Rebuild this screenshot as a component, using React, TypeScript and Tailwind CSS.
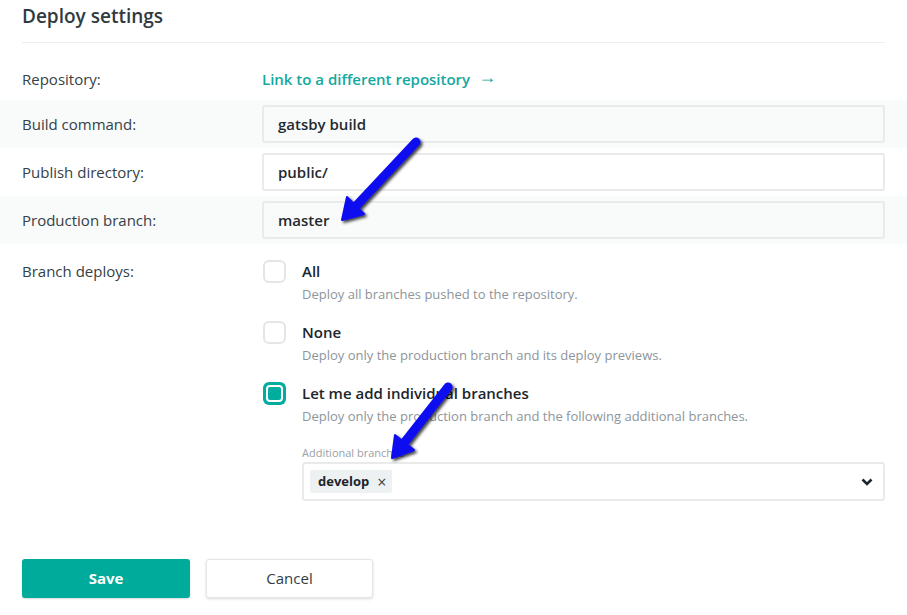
import React from "react";

const font = { fontFamily: '"Segoe UI", "Open Sans", "Noto Sans", sans-serif' };

const Row = ({
  label,
  shaded = false,
  children,
}: {
  label: string;
  shaded?: boolean;
  children: React.ReactNode;
}) => (
  <div
    className={`grid grid-cols-[240px_1fr] items-center h-[48px] px-[22px] ${
      shaded ? "bg-[#f9fafa]" : ""
    }`}
  >
    <div className="text-[15px] text-[#353f46]">{label}</div>
    <div>{children}</div>
  </div>
);

const TextField = ({ value }: { value: string }) => (
  <div className="h-[38px] rounded-[3px] border-2 border-[#e9eaea] flex items-center px-[14px] text-[15px] font-semibold text-[#1f2a30]">
    {value}
  </div>
);

const Option = ({
  title,
  description,
  checked = false,
}: {
  title: string;
  description: string;
  checked?: boolean;
}) => (
  <div className="flex gap-[16px]">
    {checked ? (
      <div className="w-[23px] h-[23px] rounded-[6px] bg-[#00ad9f] p-[3px] shrink-0">
        <div className="w-full h-full rounded-[4px] border-2 border-white bg-[#00ad9f]" />
      </div>
    ) : (
      <div className="w-[23px] h-[23px] rounded-[6px] border-2 border-[#e4e5e5] bg-white shrink-0" />
    )}
    <div>
      <div className="text-[15px] leading-[22px] font-semibold text-[#1c252b]">{title}</div>
      <div className="text-[13px] leading-[18px] mt-[3px] text-[#8d959b]">{description}</div>
    </div>
  </div>
);

const Arrows = () => (
  <svg className="absolute inset-0 pointer-events-none" width="907" height="615">
    <defs>
      <filter id="sh" x="-20%" y="-20%" width="140%" height="140%">
        <feDropShadow dx="2" dy="2" stdDeviation="1.6" floodColor="#000" floodOpacity="0.75" />
      </filter>
    </defs>
    <g filter="url(#sh)" fill="#0a0af0" stroke="#0a0af0">
      <line x1="416" y1="142" x2="356" y2="206" strokeWidth="9" strokeLinecap="round" />
      <polygon points="342,220 364,214 347,197" strokeWidth="2" strokeLinejoin="round" />
      <line x1="448" y1="387" x2="404" y2="443" strokeWidth="9" strokeLinecap="round" />
      <polygon points="392,458 414,450 395,435" strokeWidth="2" strokeLinejoin="round" />
    </g>
  </svg>
);

export default function App() {
  return (
    <div className="relative w-[907px] h-[615px] bg-white overflow-hidden" style={font}>
      <div className="px-[22px] pt-[3px]">
        <h2 className="text-[19px] leading-[26px] font-semibold text-[#303a41]">Deploy settings</h2>
        <div className="mt-[13px] h-px bg-[#eeeeee]" />
      </div>

      <div className="grid grid-cols-[240px_1fr] items-center h-[42px] px-[22px] mt-[15px]">
        <div className="text-[15px] text-[#353f46]">Repository:</div>
        <a className="flex items-center text-[15px] font-semibold text-[#14a8a0]">
          Link to a different repository
          <span className="ml-[8px] mb-[6px] text-[18px] leading-[20px] font-normal">→</span>
        </a>
      </div>

      <Row label="Build command:" shaded>
        <TextField value="gatsby build" />
      </Row>
      <Row label="Publish directory:">
        <TextField value="public/" />
      </Row>
      <Row label="Production branch:" shaded>
        <TextField value="master" />
      </Row>

      <div className="grid grid-cols-[241px_1fr] px-[22px] pt-[16px]">
        <div className="text-[15px] leading-[22px] text-[#353f46]">Branch deploys:</div>
        <div className="flex flex-col gap-[18px]">
          <Option title="All" description="Deploy all branches pushed to the repository." />
          <Option title="None" description="Deploy only the production branch and its deploy previews." />
          <div>
            <Option
              checked
              title="Let me add individual branches"
              description="Deploy only the production branch and the following additional branches."
            />
            <div className="ml-[39px] mt-[21px]">
              <div className="text-[11px] leading-[14px] text-[#9aa0a5]">Additional branches</div>
              <div className="mt-[2px] h-[39px] rounded-[3px] border-2 border-[#e9eaea] flex items-center pl-[6px] pr-[10px]">
                <div className="flex items-center h-[23px] bg-[#eef1f1] rounded-[2px] pl-[8px] pr-[6px] gap-[8px]">
                  <span className="text-[13px] font-bold text-[#1c252b]">develop</span>
                  <span className="text-[16px] leading-[16px] text-[#3a444a]">×</span>
                </div>
                <svg className="ml-auto" width="12" height="8" viewBox="0 0 12 8">
                  <path d="M1.5 1.5 L6 6 L10.5 1.5" fill="none" stroke="#1c252b" strokeWidth="2.6" />
                </svg>
              </div>
            </div>
          </div>
        </div>
      </div>

      <div className="flex gap-[16px] px-[22px] mt-[58px]">
        <button className="w-[168px] h-[39px] rounded-[3px] bg-[#00ab9c] text-white text-[15px] font-bold shadow-[0_1px_2px_rgba(0,0,0,0.15)]">
          Save
        </button>
        <button className="w-[167px] h-[39px] rounded-[3px] bg-white border border-[#e6e6e6] text-[15px] text-[#333d44] shadow-[0_1px_3px_rgba(0,0,0,0.15)]">
          Cancel
        </button>
      </div>

      <Arrows />
    </div>
  );
}
